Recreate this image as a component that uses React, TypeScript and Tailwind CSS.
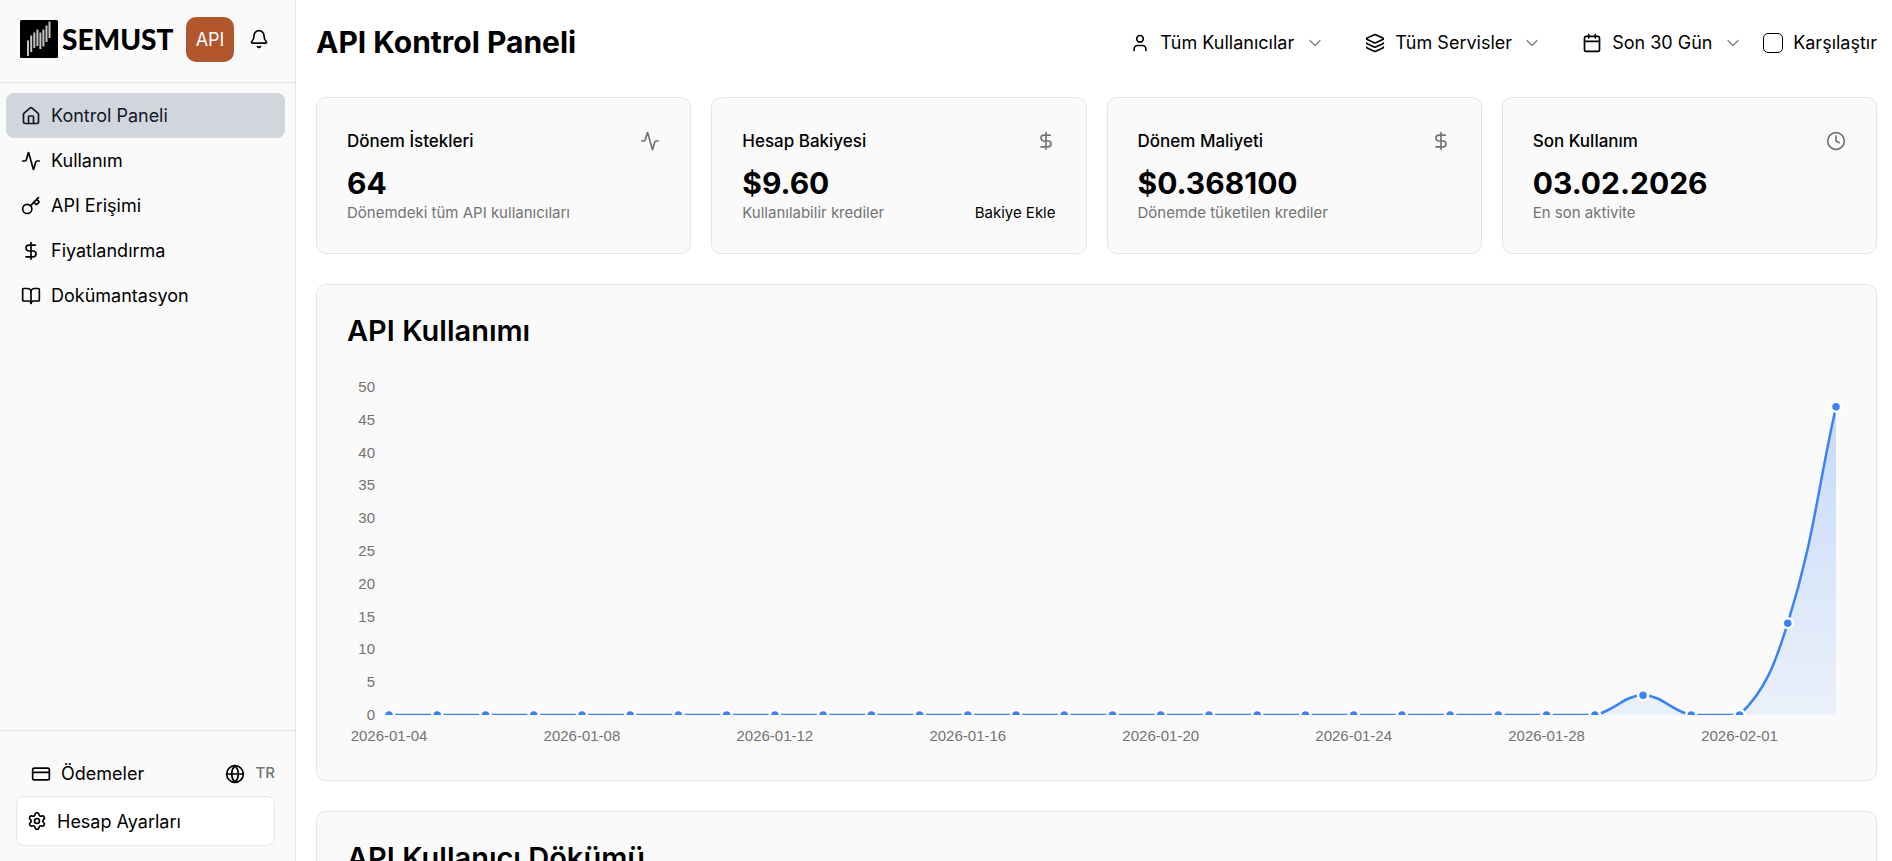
import type { ReactNode } from "react";
import {
    Activity,
    Bell,
    BookOpen,
    Calendar,
    ChevronDown,
    Clock,
    CreditCard,
    DollarSign,
    Globe,
    House,
    Key,
    Layers,
    Settings,
    User,
    type LucideIcon,
} from "lucide-react";

const navItems: { label: string; icon: LucideIcon; active?: boolean }[] = [
    { label: "Kontrol Paneli", icon: House, active: true },
    { label: "Kullanım", icon: Activity },
    { label: "API Erişimi", icon: Key },
    { label: "Fiyatlandırma", icon: DollarSign },
    { label: "Dokümantasyon", icon: BookOpen },
];

const stats: {
    title: string;
    value: string;
    note: string;
    icon: LucideIcon;
    action?: string;
}[] = [
    {
        title: "Dönem İstekleri",
        value: "64",
        note: "Dönemdeki tüm API kullanıcıları",
        icon: Activity,
    },
    {
        title: "Hesap Bakiyesi",
        value: "$9.60",
        note: "Kullanılabilir krediler",
        icon: DollarSign,
        action: "Bakiye Ekle",
    },
    {
        title: "Dönem Maliyeti",
        value: "$0.368100",
        note: "Dönemde tüketilen krediler",
        icon: DollarSign,
    },
    {
        title: "Son Kullanım",
        value: "03.02.2026",
        note: "En son aktivite",
        icon: Clock,
    },
];

// daily requests, 2026-01-04 to 2026-02-03
const usage = [...Array(26).fill(0), 3, 0, 0, 14, 47] as number[];

const Logo = () => (
    <a href="#" className="flex items-center gap-1 text-black">
        <svg viewBox="0 0 38 38" className="size-[38px]" aria-hidden="true">
            <rect width="38" height="38" rx="1.5" fill="#000" />
            <g stroke="#c4c4c4" strokeWidth="2">
                <path d="M8 20.5V36" />
                <path d="M11.2 15.5V32" />
                <path d="M14.3 12.5V28" />
                <path d="M17.4 9.5V26" />
                <path d="M20.4 12.5V29" />
                <path d="M23.4 9.5V26.5" />
                <path d="M26.5 5.5V22" />
                <path d="M29.5 1.5V18" />
            </g>
        </svg>
        <span className="font-[Lato,sans-serif] text-[28px] leading-none font-black">
            SEMUST
        </span>
    </a>
);

const Sidebar = () => {
    return (
        <aside className="flex w-[296px] shrink-0 flex-col border-r border-[#e5e5e5] bg-[#fafafa]">
            <div className="flex h-[83px] items-center border-b border-[#e5e5e5] pb-1 pl-5">
                <Logo />
                <div className="ml-auto flex items-center gap-[15px] pr-[26px]">
                    <span className="flex h-[45px] w-12 items-center justify-center rounded-[10px] bg-[#b1562d] text-[18px] text-white">
                        API
                    </span>
                    <button type="button" aria-label="Bildirimler">
                        <Bell className="size-5" />
                    </button>
                </div>
            </div>
            <nav className="flex flex-1 flex-col pt-2.5 pr-2.5 pl-1.5">
                {navItems.map(({ label, icon: Icon, active }) => (
                    <a
                        key={label}
                        href="#"
                        className={
                            active
                                ? "flex h-[45px] items-center gap-2.5 rounded-lg bg-gray-300 px-[15px] text-[18px] text-gray-900"
                                : "flex h-[45px] items-center gap-2.5 rounded-lg px-[15px] text-[18px] text-black"
                        }
                    >
                        <Icon className="size-5" />
                        {label}
                    </a>
                ))}
            </nav>
            <div className="border-t border-[#e5e5e5] pt-5 pr-5 pb-[15px] pl-4">
                <div className="flex h-[45px] items-center justify-between pl-[15px]">
                    <a
                        href="#"
                        className="flex items-center gap-2.5 text-[18px]"
                    >
                        <CreditCard className="size-5" />
                        Ödemeler
                    </a>
                    <button
                        type="button"
                        className="flex items-center gap-2.5 text-[15px] font-medium text-[#737373]"
                    >
                        <Globe className="size-5 text-black" />
                        TR
                    </button>
                </div>
                <button
                    type="button"
                    className="flex h-[50px] w-full items-center gap-2.5 rounded-lg border border-gray-200 bg-white px-2.5 text-[18px]"
                >
                    <Settings className="size-5" />
                    Hesap Ayarları
                </button>
            </div>
        </aside>
    );
};

const Filter = ({
    icon: Icon,
    label,
    value,
}: {
    icon: LucideIcon;
    label: string;
    value: string;
}) => (
    <div className="flex h-[45px] items-center gap-2.5 px-4">
        <Icon className="size-5" />
        <select
            aria-label={label}
            className="appearance-none bg-transparent text-[18px]"
        >
            <option>{value}</option>
        </select>
        <ChevronDown className="size-5 opacity-50" strokeWidth={1.5} />
    </div>
);

const Header = () => {
    return (
        <header className="mb-8 flex items-center justify-between">
            <h1 className="pb-0.5 text-[30px] leading-9 font-bold">
                API Kontrol Paneli
            </h1>
            <div className="flex items-center">
                <div className="flex gap-2">
                    <Filter
                        icon={User}
                        label="Kullanıcı"
                        value="Tüm Kullanıcılar"
                    />
                    <Filter icon={Layers} label="Servis" value="Tüm Servisler" />
                    <Filter icon={Calendar} label="Dönem" value="Son 30 Gün" />
                </div>
                <label className="ml-1 flex items-center gap-2.5 text-[18px]">
                    <input
                        type="checkbox"
                        className="size-5 appearance-none rounded-[5px] border border-black bg-white checked:bg-black"
                    />
                    Karşılaştır
                </label>
            </div>
        </header>
    );
};

const Card = ({ children }: { children: ReactNode }) => (
    <section className="rounded-[10px] border border-[#e5e5e5] bg-[#fafafa] p-[30px]">
        {children}
    </section>
);

const left = 42;
const right = 1489;
const top = 12;
const bottom = 340;
const tension = 0.4;

const points = usage.map((value, i) => ({
    x: left + ((right - left) * i) / (usage.length - 1),
    y: bottom - ((bottom - top) * value) / 50,
}));

const clampY = (y: number) => Math.min(Math.max(y, top), bottom);

// control points on both sides of point i
const controls = (i: number) => {
    const cur = points[i];
    const prev = points[i - 1] ?? cur;
    const next = points[i + 1] ?? cur;
    const d1 = Math.hypot(cur.x - prev.x, cur.y - prev.y);
    const d2 = Math.hypot(next.x - cur.x, next.y - cur.y);
    const before = (tension * d1) / (d1 + d2);
    const after = (tension * d2) / (d1 + d2);
    const dx = next.x - prev.x;
    const dy = next.y - prev.y;
    return {
        in: `${cur.x - before * dx} ${clampY(cur.y - before * dy)}`,
        out: `${cur.x + after * dx} ${clampY(cur.y + after * dy)}`,
    };
};

const line = points
    .map((p, i) =>
        i === 0
            ? `M${p.x} ${p.y}`
            : `C${controls(i - 1).out} ${controls(i).in} ${p.x} ${p.y}`
    )
    .join("");

const dayLabels = [
    "2026-01-04",
    "2026-01-08",
    "2026-01-12",
    "2026-01-16",
    "2026-01-20",
    "2026-01-24",
    "2026-01-28",
    "2026-02-01",
];

const UsageChart = () => {
    return (
        <svg
            viewBox="0 0 1499 375"
            className="mt-7 block h-auto w-full font-['Liberation_Sans',Arial,sans-serif] text-[15px]"
            role="img"
            aria-label="API Kullanımı"
        >
            <defs>
                <linearGradient
                    id="usage-fill"
                    gradientUnits="userSpaceOnUse"
                    x1="0"
                    x2="0"
                    y1={top}
                    y2={bottom}
                >
                    <stop offset="0" stopColor="#3b82f6" stopOpacity="0.28" />
                    <stop offset="1" stopColor="#3b82f6" stopOpacity="0.08" />
                </linearGradient>
                <clipPath id="usage-clip">
                    <rect width="1499" height={bottom} />
                </clipPath>
            </defs>
            <g fill="#737373" textAnchor="end">
                {[0, 5, 10, 15, 20, 25, 30, 35, 40, 45, 50].map((tick) => (
                    <text
                        key={tick}
                        x="28"
                        y={Math.round(bottom - ((bottom - top) * tick) / 50) + 5}
                    >
                        {tick}
                    </text>
                ))}
            </g>
            <g fill="#737373" textAnchor="middle">
                {dayLabels.map((day, i) => (
                    <text key={day} x={points[i * 4].x} y="366">
                        {day}
                    </text>
                ))}
            </g>
            <g clipPath="url(#usage-clip)">
                <path
                    d={`${line}L${right} ${bottom}L${left} ${bottom}Z`}
                    fill="url(#usage-fill)"
                />
                <path d={line} fill="none" stroke="#3b82f6" strokeWidth="2.5" />
                {points.map((p) => (
                    <circle
                        key={p.x}
                        cx={p.x}
                        cy={p.y}
                        r="5"
                        fill="#3b82f6"
                        stroke="#fff"
                        strokeWidth="2.5"
                    />
                ))}
            </g>
        </svg>
    );
};

const App = () => {
    return (
        <div className="flex h-screen bg-white font-[Inter,sans-serif] text-black">
            <Sidebar />
            <main className="min-w-0 flex-1 overflow-y-auto pt-5 pr-[15px] pb-8 pl-5 [scrollbar-width:none]">
                <Header />
                <div className="mb-[30px] grid grid-cols-4 gap-5">
                    {stats.map(({ title, value, note, icon: Icon, action }) => (
                        <Card key={title}>
                            <div className="mb-[9px] flex items-center justify-between">
                                <h3 className="text-[17px] leading-[26px] font-medium">
                                    {title}
                                </h3>
                                <Icon className="size-5 text-[#737373]" />
                            </div>
                            <div className="text-[30px] leading-10 font-bold">
                                {value}
                            </div>
                            <div className="flex justify-between text-[15px] leading-5">
                                <p className="text-[#737373]">{note}</p>
                                {action && <a href="#">{action}</a>}
                            </div>
                        </Card>
                    ))}
                </div>
                <div className="flex flex-col gap-[30px]">
                    <Card>
                        <h2 className="text-[29px] leading-8 font-semibold">
                            API Kullanımı
                        </h2>
                        <UsageChart />
                    </Card>
                    <Card>
                        <h2 className="text-[29px] leading-8 font-semibold">
                            API Kullanıcı Dökümü
                        </h2>
                    </Card>
                </div>
            </main>
        </div>
    );
};

export default App;
